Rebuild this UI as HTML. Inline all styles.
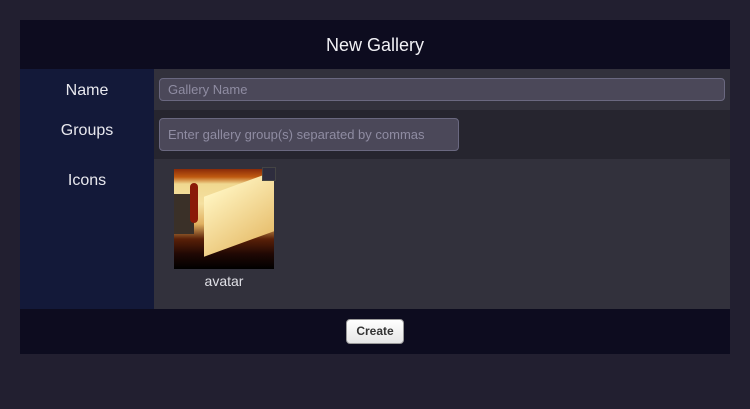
<!DOCTYPE html>
<html><head><style>
body{margin:0;width:750px;height:409px;background:#221f30;font-family:"Liberation Sans",sans-serif;position:relative;overflow:hidden}
.p{position:absolute}
.lbl{position:absolute;left:20px;width:134px;text-align:center;color:#e8e8ee;font-size:16px}
input{position:absolute;box-sizing:border-box;border:1px solid #6a6880;border-radius:4px;background:#4b4859;color:#8e8ba0;font-family:"Liberation Sans",sans-serif;font-size:13px;padding:0 8px;outline:none}
input::placeholder{color:#8f8ca2}
</style></head><body>
<div class="p" style="left:20px;top:20px;width:710px;height:49px;background:#0d0c1f;color:#f0f0f4;font-size:18px;text-align:center;line-height:50px">New Gallery</div>
<div class="p" style="left:20px;top:69px;width:134px;height:240px;background:#131939"></div>
<div class="p" style="left:154px;top:69px;width:576px;height:41px;background:#32313c"></div>
<div class="p" style="left:154px;top:110px;width:576px;height:49px;background:#26252f"></div>
<div class="p" style="left:154px;top:159px;width:576px;height:150px;background:#32313c"></div>
<div class="p" style="left:20px;top:309px;width:710px;height:45px;background:#0d0c1f"></div>
<div class="lbl" style="top:82px">Name</div>
<div class="lbl" style="top:122px">Groups</div>
<div class="lbl" style="top:172px">Icons</div>
<input style="left:159px;top:78px;width:566px;height:23px" placeholder="Gallery Name" value="">
<input style="left:159px;top:118px;width:300px;height:33px" placeholder="Enter gallery group(s) separated by commas">
<div class="p" style="left:174px;top:169px;width:100px;height:100px;overflow:hidden;background:linear-gradient(180deg,#8a2a08 0%,#c05a10 8%,#f0d890 15%,#f5e0a0 35%,#e0b060 55%,#5a2008 70%,#200804 85%,#000 100%)">
<div class="p" style="left:30px;top:15px;width:70px;height:60px;background:linear-gradient(160deg,#fff4c0,#e8c070);transform:skewY(-20deg)"></div>
<div class="p" style="left:0;top:25px;width:20px;height:40px;background:#3a3028"></div>
<div class="p" style="left:16px;top:14px;width:8px;height:40px;border-radius:4px;background:#8a1a08"></div>
</div>
<div class="p" style="left:262px;top:167px;width:12px;height:12px;background:#2e2d3e;border:1px solid #444"></div>
<div class="p" style="left:174px;top:273px;width:100px;text-align:center;color:#e0e0e6;font-size:14px">avatar</div>
<div class="p" style="left:346px;top:319px;width:58px;height:25px;box-sizing:border-box;border:1px solid #999;border-radius:4px;background:linear-gradient(#fff,#e6e6e6);color:#333;font-weight:bold;font-size:12px;text-align:center;line-height:23px">Create</div>
</body></html>
